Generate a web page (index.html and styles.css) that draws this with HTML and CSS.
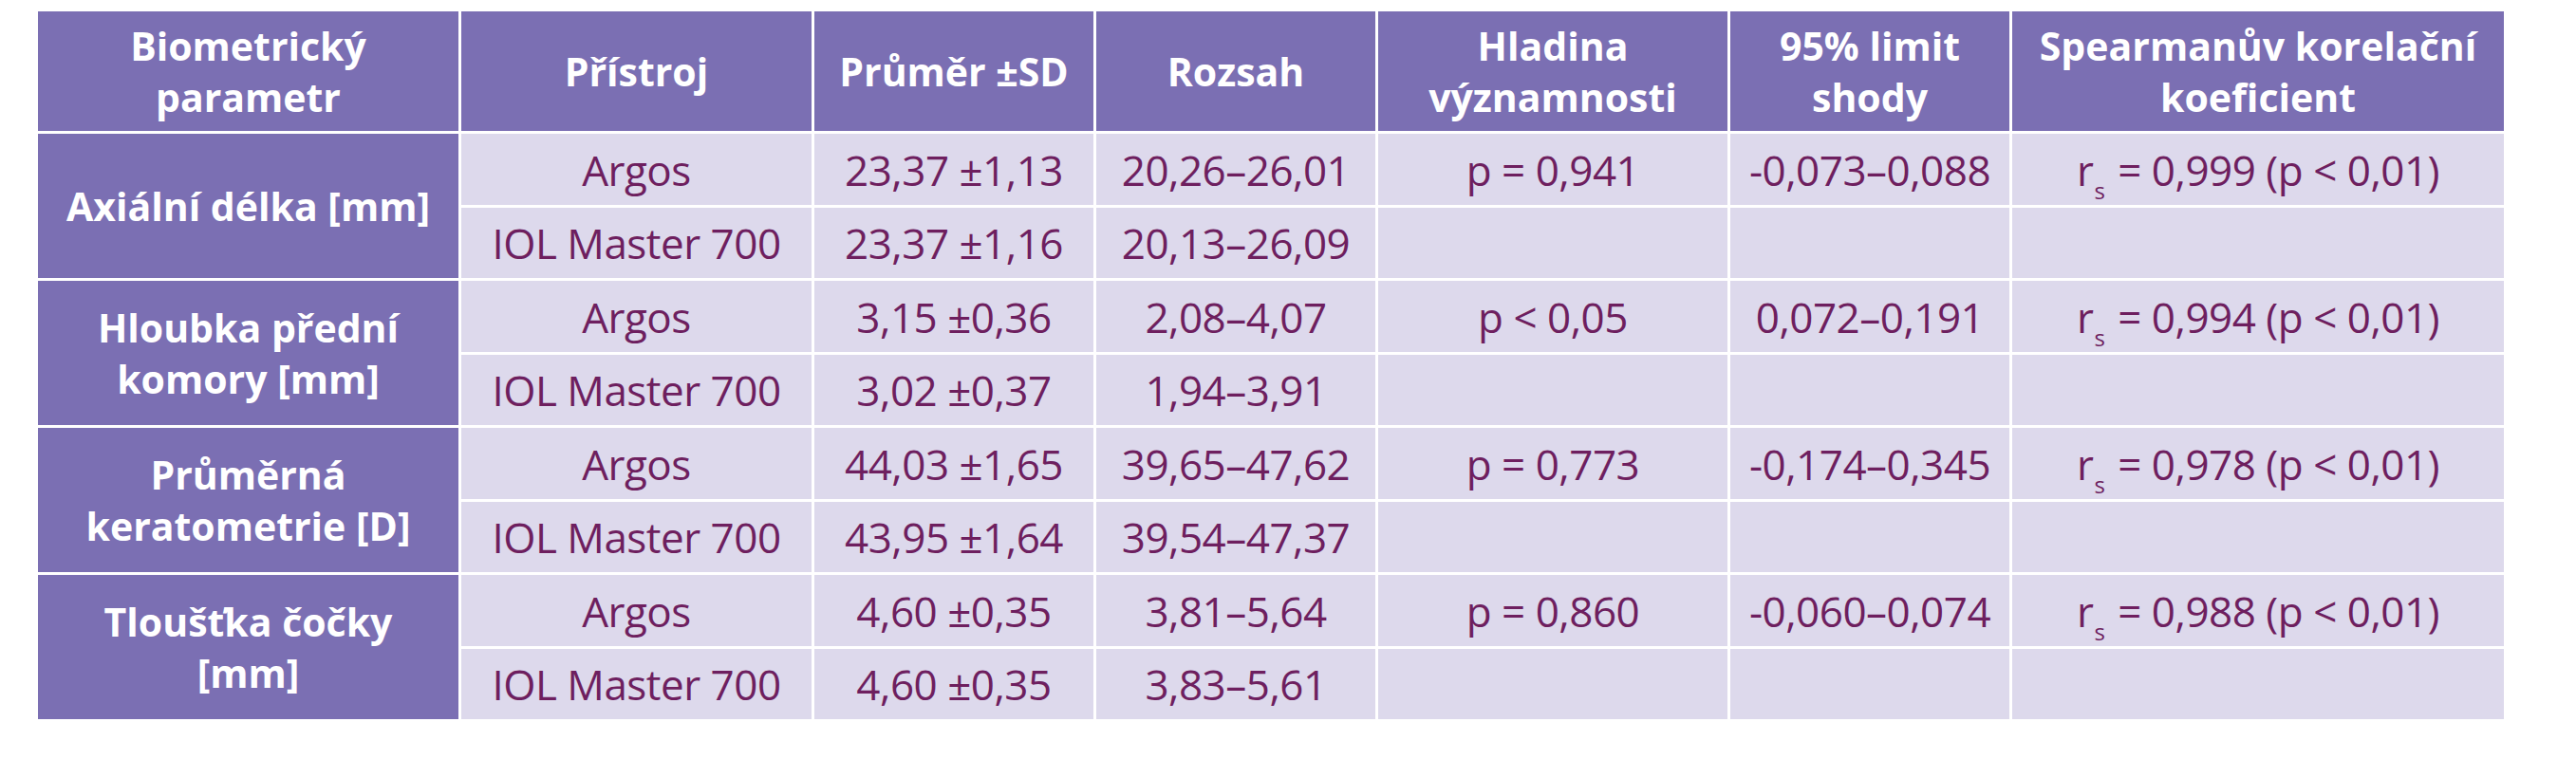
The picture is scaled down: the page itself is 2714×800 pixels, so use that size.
FILE: index.html
```html
<!DOCTYPE html>
<html lang="cs">
<head>
<meta charset="utf-8">
<title>Biometrie</title>
<link rel="stylesheet" href="styles.css">
</head>
<body>
<table class="bio">
  <colgroup>
    <col class="c1"><col class="c2"><col class="c3"><col class="c4"><col class="c5"><col class="c6"><col class="c7">
  </colgroup>
  <thead>
    <tr>
      <th>Biometrický<br>parametr</th>
      <th>Přístroj</th>
      <th>Průměr ±SD</th>
      <th>Rozsah</th>
      <th>Hladina<br>významnosti</th>
      <th>95% limit<br>shody</th>
      <th>Spearmanův korelační<br>koeficient</th>
    </tr>
  </thead>
  <tbody>
    <tr class="ra">
      <td class="param" rowspan="2">Axiální délka [mm]</td>
      <td>Argos</td><td>23,37 ±1,13</td><td>20,26–26,01</td><td>p = 0,941</td><td>-0,073–0,088</td><td>r<sub>s</sub> = 0,999 (p &lt; 0,01)</td>
    </tr>
    <tr class="rb">
      <td>IOL Master 700</td><td>23,37 ±1,16</td><td>20,13–26,09</td><td></td><td></td><td></td>
    </tr>
    <tr class="ra">
      <td class="param" rowspan="2">Hloubka přední<br>komory [mm]</td>
      <td>Argos</td><td>3,15 ±0,36</td><td>2,08–4,07</td><td>p &lt; 0,05</td><td>0,072–0,191</td><td>r<sub>s</sub> = 0,994 (p &lt; 0,01)</td>
    </tr>
    <tr class="rb">
      <td>IOL Master 700</td><td>3,02 ±0,37</td><td>1,94–3,91</td><td></td><td></td><td></td>
    </tr>
    <tr class="ra">
      <td class="param" rowspan="2">Průměrná<br>keratometrie [D]</td>
      <td>Argos</td><td>44,03 ±1,65</td><td>39,65–47,62</td><td>p = 0,773</td><td>-0,174–0,345</td><td>r<sub>s</sub> = 0,978 (p &lt; 0,01)</td>
    </tr>
    <tr class="rb">
      <td>IOL Master 700</td><td>43,95 ±1,64</td><td>39,54–47,37</td><td></td><td></td><td></td>
    </tr>
    <tr class="ra">
      <td class="param" rowspan="2">Tloušťka čočky<br>[mm]</td>
      <td>Argos</td><td>4,60 ±0,35</td><td>3,81–5,64</td><td>p = 0,860</td><td>-0,060–0,074</td><td>r<sub>s</sub> = 0,988 (p &lt; 0,01)</td>
    </tr>
    <tr class="rb">
      <td>IOL Master 700</td><td>4,60 ±0,35</td><td>3,83–5,61</td><td></td><td></td><td></td>
    </tr>
  </tbody>
</table>
</body>
</html>
```

FILE: styles.css
```css
html, body {
  margin: 0;
  padding: 0;
  background: #ffffff;
}

.bio {
  margin: 9px 0 0 37px;
  border-collapse: separate;
  border-spacing: 3px;
  table-layout: fixed;
  width: 2604px;
  font-family: "Open Sans", "Liberation Sans", sans-serif;
}

.c1 { width: 443px; }
.c2 { width: 369px; }
.c3 { width: 294px; }
.c4 { width: 294px; }
.c5 { width: 368px; }
.c6 { width: 294px; }
.c7 { width: 518px; }

.bio th,
.bio td {
  padding: 0;
  text-align: center;
  vertical-align: middle;
}

.bio th {
  height: 126px;
  background: #7b6fb3;
  color: #ffffff;
  font-weight: bold;
  font-size: 41px;
  line-height: 54px;
  font-stretch: 88%;
}

.bio td {
  background: #ddd9ec;
  color: #6e1f5f;
  font-size: 44px;
  line-height: 54px;
  font-stretch: 88%;
  letter-spacing: -0.5px;
}

.bio .ra td { height: 75px; }
.bio .rb td { height: 74px; }

.bio td.param {
  background: #7b6fb3;
  color: #ffffff;
  font-weight: bold;
  font-size: 41px;
  letter-spacing: 0;
}

.bio sub {
  font-size: 24px;
  line-height: 0;
  vertical-align: -14px;
  margin: 0 3px 0 1px;
}
```
